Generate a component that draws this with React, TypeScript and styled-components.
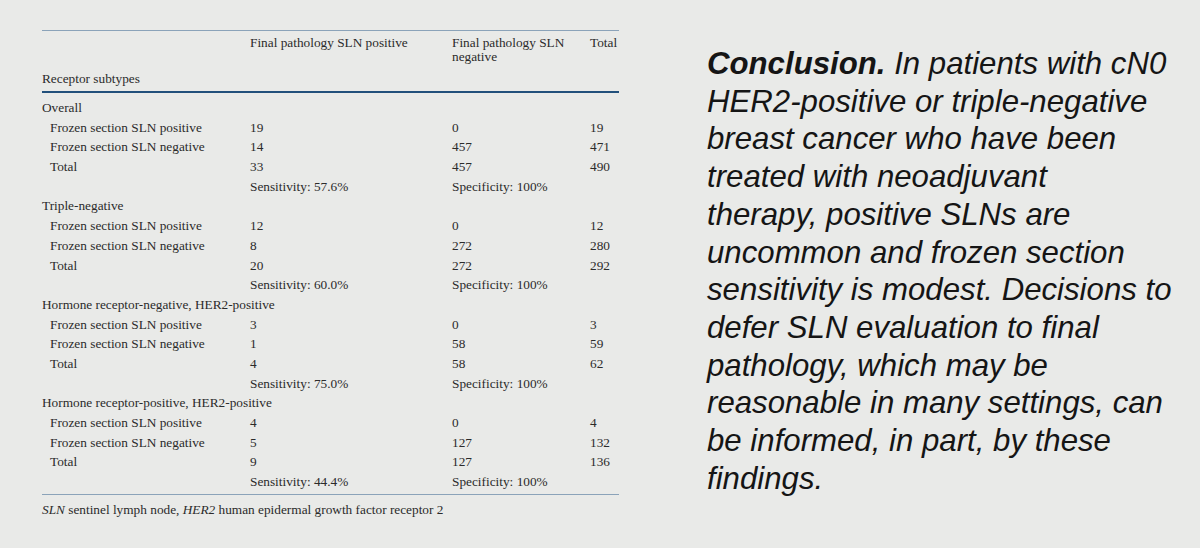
import React from 'react'
import styled, { createGlobalStyle } from 'styled-components'

const GlobalStyle = createGlobalStyle`
  html, body {
    margin: 0;
    padding: 0;
    background: #e9eae8;
  }
`

const Page = styled.main`
  display: flex;
  align-items: flex-start;
  width: 1200px;
  height: 548px;
  box-sizing: border-box;
  padding: 30px 0 0 42px;
  gap: 88px;
  overflow: hidden;
`

const TableBlock = styled.section`
  width: 577px;
  font-family: 'Liberation Serif', 'Times New Roman', serif;
  font-size: 13.3px;
  color: #2b2b2b;
`

const Grid = styled.div`
  display: grid;
  grid-template-columns: 208px 202px 138px 29px;
`

const HeadRow = styled(Grid)`
  min-height: 50.5px;
  border-top: 1.5px solid #8ba3b9;
  border-bottom: 2.5px solid #22507b;
  padding: 4.5px 0 5px;
  line-height: 14.5px;
`

const HeadCell = styled.div<{ $bottom?: boolean }>`
  align-self: ${(p) => (p.$bottom ? 'end' : 'start')};
  white-space: ${(p) => (p.$bottom ? 'nowrap' : 'normal')};
  padding-right: 8px;
`

const Body = styled.div`
  padding: 5px 0 2px;
  border-bottom: 1.5px solid #8ba3b9;
  line-height: 19.7px;
`

const GroupLabel = styled.div`
  height: 19.7px;
  white-space: nowrap;
`

const Row = styled(Grid)`
  height: 19.7px;
`

const Cell = styled.div<{ $indent?: boolean }>`
  padding-left: ${(p) => (p.$indent ? '8px' : '0')};
  white-space: nowrap;
`

const Footnote = styled.p`
  margin: 6px 0 0;
  line-height: 18px;
  white-space: nowrap;

  em {
    font-style: italic;
  }
`

const Conclusion = styled.p`
  margin: 15px 0 0;
  font-family: 'Liberation Sans', Arial, sans-serif;
  font-size: 31.2px;
  line-height: 37.7px;
  font-style: italic;
  color: #151515;
  white-space: nowrap;

  strong {
    font-weight: 700;
  }
`

interface Group {
  name: string
  positive: [string, string, string]
  negative: [string, string, string]
  total: [string, string, string]
  sensitivity: string
  specificity: string
}

const groups: Group[] = [
  {
    name: 'Overall',
    positive: ['19', '0', '19'],
    negative: ['14', '457', '471'],
    total: ['33', '457', '490'],
    sensitivity: '57.6%',
    specificity: '100%',
  },
  {
    name: 'Triple-negative',
    positive: ['12', '0', '12'],
    negative: ['8', '272', '280'],
    total: ['20', '272', '292'],
    sensitivity: '60.0%',
    specificity: '100%',
  },
  {
    name: 'Hormone receptor-negative, HER2-positive',
    positive: ['3', '0', '3'],
    negative: ['1', '58', '59'],
    total: ['4', '58', '62'],
    sensitivity: '75.0%',
    specificity: '100%',
  },
  {
    name: 'Hormone receptor-positive, HER2-positive',
    positive: ['4', '0', '4'],
    negative: ['5', '127', '132'],
    total: ['9', '127', '136'],
    sensitivity: '44.4%',
    specificity: '100%',
  },
]

const DataRow: React.FC<{ label: string; values: string[] }> = ({ label, values }) => (
  <Row>
    <Cell $indent>{label}</Cell>
    {values.map((v, i) => (
      <Cell key={i}>{v}</Cell>
    ))}
  </Row>
)

const conclusionLines = [
  'HER2-positive or triple-negative',
  'breast cancer who have been',
  'treated with neoadjuvant',
  'therapy, positive SLNs are',
  'uncommon and frozen section',
  'sensitivity is modest. Decisions to',
  'defer SLN evaluation to final',
  'pathology, which may be',
  'reasonable in many settings, can',
  'be informed, in part, by these',
  'findings.',
]

const App: React.FC = () => {
  return (
    <>
      <GlobalStyle />
      <Page>
        <TableBlock>
          <HeadRow>
            <HeadCell $bottom>Receptor subtypes</HeadCell>
            <HeadCell>Final pathology SLN positive</HeadCell>
            <HeadCell>Final pathology SLN negative</HeadCell>
            <HeadCell>Total</HeadCell>
          </HeadRow>

          <Body>
            {groups.map((g) => (
              <React.Fragment key={g.name}>
                <GroupLabel>{g.name}</GroupLabel>
                <DataRow label='Frozen section SLN positive' values={g.positive} />
                <DataRow label='Frozen section SLN negative' values={g.negative} />
                <DataRow label='Total' values={g.total} />
                <Row>
                  <Cell />
                  <Cell>Sensitivity: {g.sensitivity}</Cell>
                  <Cell>Specificity: {g.specificity}</Cell>
                  <Cell />
                </Row>
              </React.Fragment>
            ))}
          </Body>

          <Footnote>
            <em>SLN</em> sentinel lymph node, <em>HER2</em> human epidermal growth factor receptor 2
          </Footnote>
        </TableBlock>

        <Conclusion>
          <strong>Conclusion.</strong> In patients with cN0
          {conclusionLines.map((line) => (
            <React.Fragment key={line}>
              <br />
              {line}
            </React.Fragment>
          ))}
        </Conclusion>
      </Page>
    </>
  )
}

export default App
